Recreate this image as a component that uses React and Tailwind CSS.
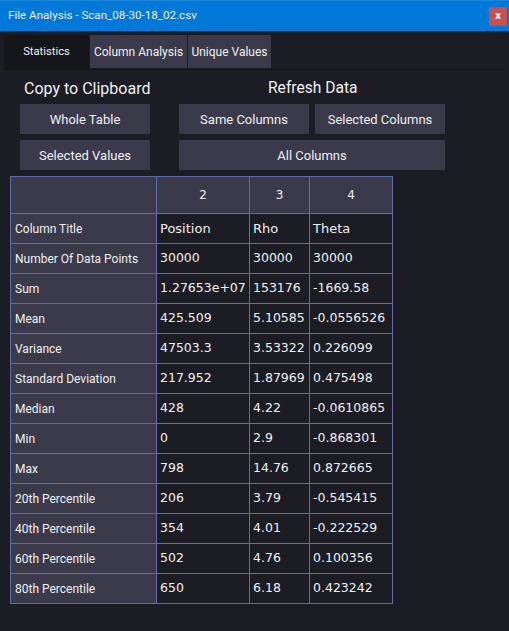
const stats = [
  ["Column Title", "Position", "Rho", "Theta"],
  ["Number Of Data Points", "30000", "30000", "30000"],
  ["Sum", "1.27653e+07", "153176", "-1669.58"],
  ["Mean", "425.509", "5.10585", "-0.0556526"],
  ["Variance", "47503.3", "3.53322", "0.226099"],
  ["Standard Deviation", "217.952", "1.87969", "0.475498"],
  ["Median", "428", "4.22", "-0.0610865"],
  ["Min", "0", "2.9", "-0.868301"],
  ["Max", "798", "14.76", "0.872665"],
  ["20th Percentile", "206", "3.79", "-0.545415"],
  ["40th Percentile", "354", "4.01", "-0.222529"],
  ["60th Percentile", "502", "4.76", "0.100356"],
  ["80th Percentile", "650", "6.18", "0.423242"],
];

const Btn = ({ className, children }) => (
  <button className={`h-[30px] bg-[#3a3a4b] pt-px text-[13px] text-[#f0f0f0] ${className}`}>{children}</button>
);

const Tab = ({ className, children }) => (
  <div className={`flex h-[33px] items-center justify-center whitespace-nowrap bg-[#3a3a4b] text-[12px] text-[#f0f0f0] ${className}`}>
    {children}
  </div>
);

const App = () => {
  return (
    <div className="flex h-[631px] w-[509px] flex-col overflow-hidden bg-[#1c1c24] font-['Roboto','Liberation_Sans',sans-serif]">
      <div className="flex h-[31px] shrink-0 items-center justify-between border-t border-[#1a86dc] bg-[#0078d7] pl-2 pr-[2px] text-[11.6px] text-[#f0f0f0]">
        <span>File Analysis - Scan_08-30-18_02.csv</span>
        <div className="flex h-[19px] w-[18px] items-center justify-center bg-[#c75050] text-[11px] font-bold text-white">x</div>
      </div>

      <div className="ml-1 mr-[4px] mt-[4px] flex h-[35px] shrink-0 gap-px border-b border-[#14141a]">
        <div className="flex h-[34px] w-[85px] items-center justify-center bg-[#15161a] text-[11.2px] text-[#f0f0f0]">Statistics</div>
        <Tab className="w-[97px]">Column Analysis</Tab>
        <Tab className="w-[83px]">Unique Values</Tab>
      </div>

      <div className="mt-[6px] flex h-[25px] shrink-0 items-center text-[16px] text-[#f0f0f0]">
        <span className="ml-6 w-[126px] whitespace-nowrap">Copy to Clipboard</span>
        <span className="ml-[118px] whitespace-nowrap text-[15.6px]">Refresh Data</span>
      </div>

      <div className="ml-5 mt-[3px] flex shrink-0 gap-[29px]">
        <div className="flex w-[130px] flex-col gap-[6px]">
          <Btn className="w-full">Whole Table</Btn>
          <Btn className="w-full">Selected Values</Btn>
        </div>
        <div className="grid w-[266px] grid-cols-[130px_130px] gap-x-[6px] gap-y-[6px]">
          <Btn>Same Columns</Btn>
          <Btn>Selected Columns</Btn>
          <Btn className="col-span-2">All Columns</Btn>
        </div>
      </div>

      <table className="ml-[10px] mt-[6px] w-[382px] table-fixed border-collapse border border-[#5f6ea8] text-[13px]">
        <colgroup>
          <col className="w-[146px]" />
          <col className="w-[93px]" />
          <col className="w-[60px]" />
          <col className="w-[83px]" />
        </colgroup>
        <thead>
          <tr className="h-[37px] bg-[#3a3a4b] text-[#f0f0f0]">
            <th className="border border-[#5f6ea8]"></th>
            {["2", "3", "4"].map((n) => (
              <th key={n} className="border border-[#5f6ea8] font-['DejaVu_Sans',sans-serif] text-[12px] font-normal">{n}</th>
            ))}
          </tr>
        </thead>
        <tbody>
          {stats.map((row, r) => (
            <tr key={row[0]} className="h-[30px]">
              <td className="whitespace-nowrap border border-[#5f6ea8] bg-[#3a3a4b] pl-[4px] text-[12px] text-[#f0f0f0]">{row[0]}</td>
              {row.slice(1).map((val, i) => (
                <td
                  key={i}
                  className={`whitespace-nowrap border border-[#5f6ea8] bg-[#1c1c24] pl-[3px] font-['DejaVu_Sans',sans-serif] text-[#f0f0f0] ${r === 0 ? "text-[13px]" : "text-[12.5px]"}`}
                >
                  {val}
                </td>
              ))}
            </tr>
          ))}
        </tbody>
      </table>
    </div>
  );
};

export default App;
